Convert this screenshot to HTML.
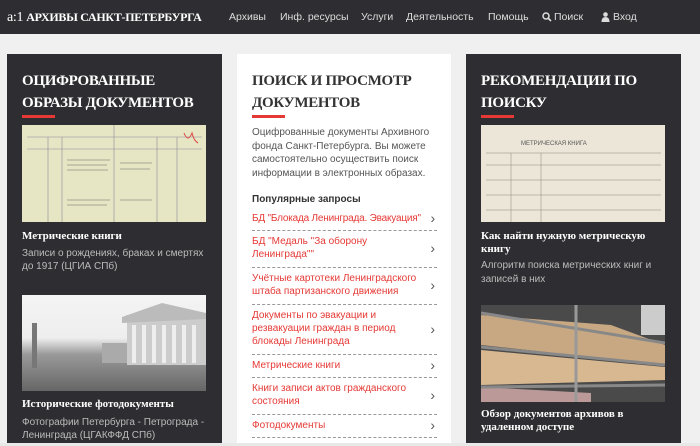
<!DOCTYPE html>
<html><head><meta charset="utf-8"><style>
*{margin:0;padding:0;box-sizing:border-box}
body{width:700px;height:446px;overflow:hidden;background:#f0f0f0;font-family:"Liberation Sans","Noto Sans CJK SC",sans-serif;position:relative}
.nav{position:absolute;left:0;top:0;width:700px;height:34px;background:#2e2e32;color:#fff}
.logo{position:absolute;left:7px;top:10px;font:bold 12px "Liberation Serif",serif;letter-spacing:-0.3px;white-space:nowrap}
.logo span{font-weight:normal;font-size:14px;margin-right:3px}
.menu{position:absolute;top:11px;font-size:10.5px;color:#ddd;white-space:nowrap}
.col{position:absolute;top:54px;height:392px;width:215px}
.dark{background:#2e2e32;color:#fff}
.light{background:#fff;color:#333}
h2{position:absolute;left:15px;top:16px;font:bold 15px/22px "Liberation Serif",serif;letter-spacing:-0.3px;white-space:nowrap}
.bar{position:absolute;left:15px;top:61px;width:33px;height:3px;background:#e53935}
.img{position:absolute;left:15px;width:184px}
.t{position:absolute;left:15px;font:bold 11px/13px "Liberation Serif",serif;color:#fff}
.d{position:absolute;left:15px;font-size:10px;line-height:13px;color:#bbb;width:195px}
.q{position:absolute;left:15px;width:185px;border-bottom:1px dashed #999;color:#e53935;font-size:10px;line-height:13px;padding-top:3.5px;padding-right:12px}
.q:after{content:"›";position:absolute;right:2px;top:50%;transform:translateY(-55%);color:#555;font-size:14px}
</style></head><body>
<div class="nav">
<div class="logo"><span>a:1</span>АРХИВЫ САНКТ-ПЕТЕРБУРГА</div>
<div class="menu" style="left:229px">Архивы</div>
<div class="menu" style="left:280px">Инф. ресурсы</div>
<div class="menu" style="left:361px">Услуги</div>
<div class="menu" style="left:406px">Деятельность</div>
<div class="menu" style="left:488px">Помощь</div>
<svg style="position:absolute;left:542px;top:12px" width="10" height="10"><circle cx="4" cy="4" r="3" stroke="#ddd" stroke-width="1.5" fill="none"/><line x1="6" y1="6" x2="9" y2="9" stroke="#ddd" stroke-width="1.6"/></svg>
<div class="menu" style="left:554px">Поиск</div>
<svg style="position:absolute;left:601px;top:12px" width="9" height="10"><circle cx="4.5" cy="2.5" r="2.3" fill="#ddd"/><path d="M0.5 10 Q0.5 5 4.5 5 Q8.5 5 8.5 10Z" fill="#ddd"/></svg>
<div class="menu" style="left:613px">Вход</div>
</div>

<div class="col dark" style="left:7px">
<h2>ОЦИФРОВАННЫЕ<br>ОБРАЗЫ ДОКУМЕНТОВ</h2><div class="bar"></div>
<div class="img" style="top:71px;height:97px;background:#e6e6c4">
<svg width="184" height="97"><g stroke="#889" stroke-width=".6" fill="none"><line x1="92" y1="0" x2="92" y2="97"/><line x1="5" y1="12" x2="180" y2="12"/><line x1="5" y1="24" x2="180" y2="24"/><line x1="26" y1="12" x2="26" y2="97"/><line x1="40" y1="12" x2="40" y2="97"/><line x1="135" y1="12" x2="135" y2="97"/><line x1="155" y1="12" x2="155" y2="97"/></g><g stroke="#666" stroke-width=".5"><line x1="45" y1="35" x2="88" y2="35"/><line x1="45" y1="40" x2="85" y2="40"/><line x1="45" y1="45" x2="86" y2="45"/><line x1="98" y1="38" x2="130" y2="38"/><line x1="98" y1="44" x2="128" y2="44"/><line x1="45" y1="75" x2="88" y2="75"/><line x1="45" y1="80" x2="85" y2="80"/><line x1="98" y1="75" x2="130" y2="75"/></g><path d="M162 8 q4 10 8 0 q2 8 6 10" stroke="#d44" fill="none"/></svg></div>
<div class="t" style="top:176px">Метрические книги</div>
<div class="d" style="top:193px">Записи о рождениях, браках и смертях до 1917 (ЦГИА СПб)</div>
<div class="img" style="top:241px;height:96px;background:linear-gradient(#f4f4f4 0,#eee 45%,#999 62%,#666 100%)">
<svg width="184" height="96"><rect x="105" y="20" width="79" height="50" fill="#ccc"/><polygon points="100,22 140,8 184,18 184,24 100,28" fill="#bbb"/><g fill="#eee"><rect x="110" y="30" width="4" height="38"/><rect x="120" y="30" width="4" height="38"/><rect x="130" y="30" width="4" height="38"/><rect x="140" y="30" width="4" height="38"/><rect x="150" y="30" width="4" height="38"/><rect x="160" y="30" width="4" height="38"/><rect x="170" y="30" width="4" height="38"/></g><rect x="10" y="28" width="5" height="45" fill="#777"/><rect x="80" y="48" width="25" height="20" fill="#aaa"/></svg></div>
<div class="t" style="top:344px">Исторические фотодокументы</div>
<div class="d" style="top:362px">Фотографии Петербурга - Петрограда - Ленинграда (ЦГАКФФД СПб)</div>
</div>

<div class="col light" style="left:237px;width:214px">
<h2 style="color:#333">ПОИСК И ПРОСМОТР<br>ДОКУМЕНТОВ</h2><div class="bar"></div>
<div class="d" style="top:72px;color:#555;width:192px;line-height:13.5px">Оцифрованные документы Архивного фонда Санкт-Петербурга. Вы можете самостоятельно осуществить поиск информации в электронных образах.</div>
<div style="position:absolute;left:15px;top:140px;font-size:10px;font-weight:bold;color:#333">Популярные запросы</div>
<div class="q" style="top:154px;height:23px;white-space:nowrap;letter-spacing:-0.2px;padding-right:0">БД "Блокада Ленинграда. Эвакуация"</div>
<div class="q" style="top:177px;height:37px">БД "Медаль "За оборону Ленинграда""</div>
<div class="q" style="top:214px;height:37px">Учётные картотеки Ленинградского штаба партизанского движения</div>
<div class="q" style="top:251px;height:50px">Документы по эвакуации и резвакуации граждан в период блокады Ленинграда</div>
<div class="q" style="top:301px;height:23px">Метрические книги</div>
<div class="q" style="top:324px;height:37px">Книги записи актов гражданского состояния</div>
<div class="q" style="top:361px;height:23px">Фотодокументы</div>
</div>

<div class="col dark" style="left:466px">
<h2>РЕКОМЕНДАЦИИ ПО<br>ПОИСКУ</h2><div class="bar"></div>
<div class="img" style="top:71px;height:97px;background:#ece6d8">
<svg width="184" height="97"><g stroke="#887" stroke-width=".5"><line x1="5" y1="28" x2="180" y2="28"/><line x1="5" y1="40" x2="180" y2="40"/><line x1="5" y1="55" x2="180" y2="55"/><line x1="5" y1="70" x2="180" y2="70"/><line x1="5" y1="85" x2="180" y2="85"/><line x1="30" y1="28" x2="30" y2="97"/><line x1="60" y1="28" x2="60" y2="97"/></g><text x="40" y="20" font-size="6" fill="#555">МЕТРИЧЕСКАЯ КНИГА</text></svg></div>
<div class="t" style="top:176px;width:185px">Как найти нужную метрическую книгу</div>
<div class="d" style="top:205px;line-height:14px;width:190px">Алгоритм поиска метрических книг и записей в них</div>
<div class="img" style="top:251px;height:97px;background:#555">
<svg width="184" height="97"><rect x="0" y="0" width="184" height="97" fill="#4a4a4a"/><polygon points="0,10 130,20 184,40 184,60 0,40" fill="#c8a882"/><polygon points="0,45 184,62 184,75 0,80" fill="#d8b890"/><polygon points="0,82 110,88 110,97 0,97" fill="#b99"/><g stroke="#888" stroke-width="3"><line x1="0" y1="8" x2="184" y2="38"/><line x1="0" y1="42" x2="184" y2="60"/><line x1="0" y1="82" x2="184" y2="80"/></g><line x1="95" y1="0" x2="95" y2="97" stroke="#999" stroke-width="3"/><rect x="160" y="0" width="24" height="30" fill="#ccc"/></svg></div>
<div class="t" style="top:354px;width:185px">Обзор документов архивов в удаленном доступе</div>
</div>
<div style="position:absolute;left:0;top:443px;width:700px;height:3px;background:#e8e8e8"></div>
</body></html>
